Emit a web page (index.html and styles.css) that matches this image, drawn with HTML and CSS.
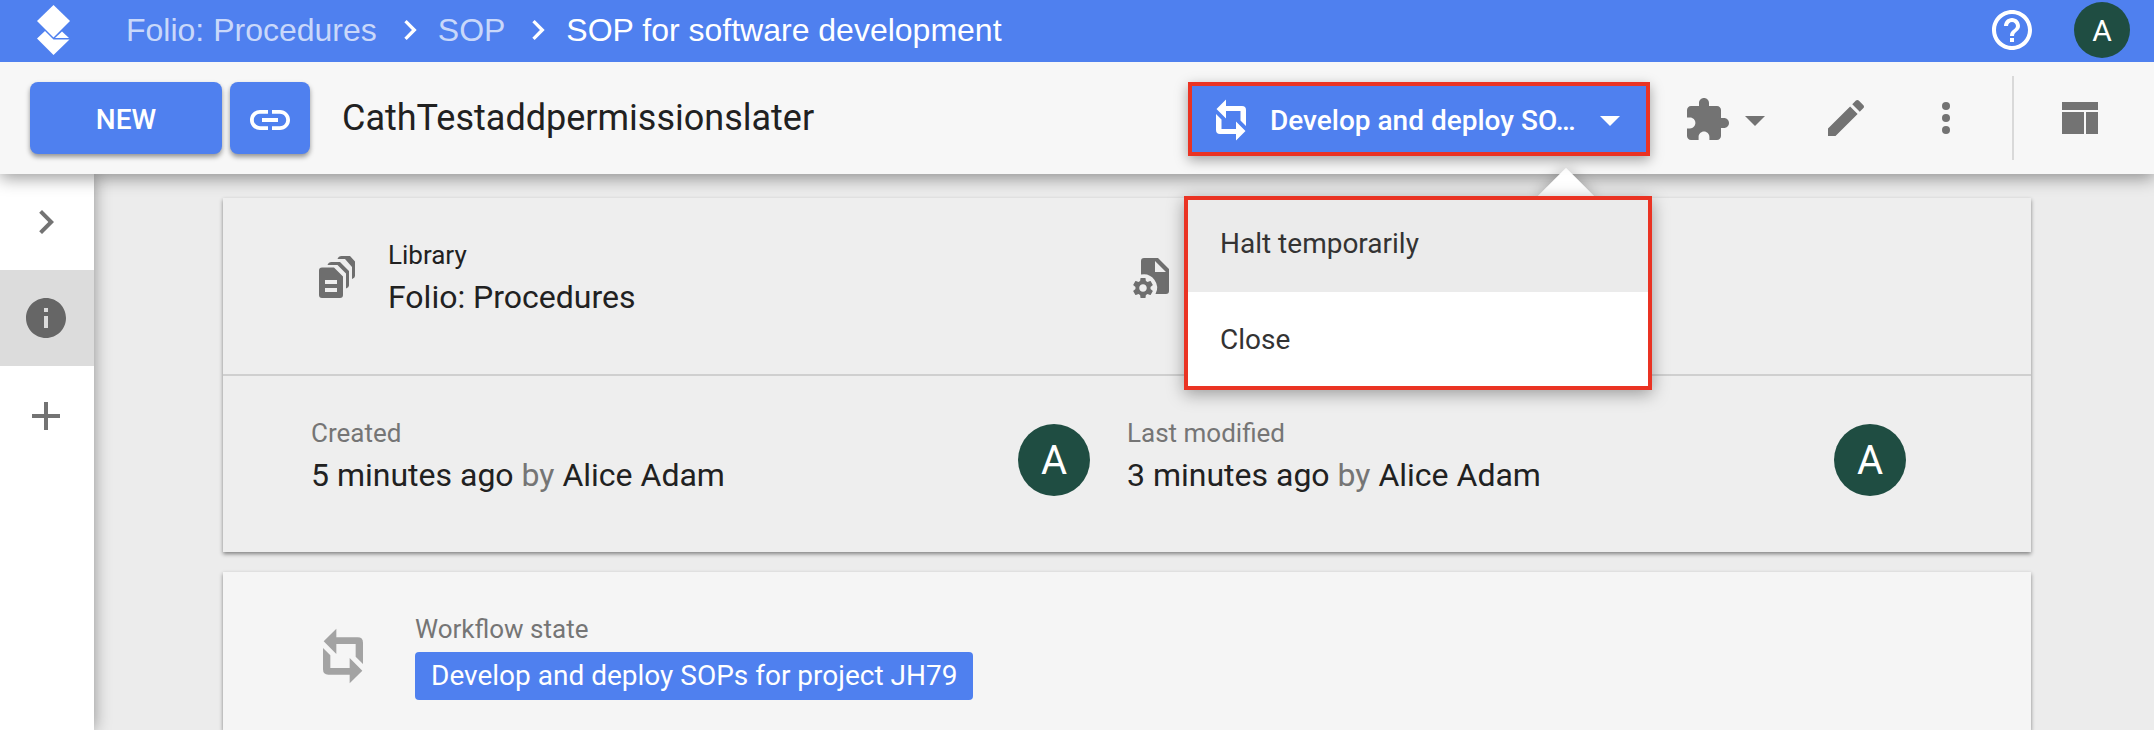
FILE: index.html
```
<!DOCTYPE html>
<html lang="en">
<head>
<meta charset="UTF-8" />
<meta name="viewport" content="width=device-width, initial-scale=1" />
<title>SOP for software development</title>
<link rel="stylesheet" href="styles.css">
</head>
<body>
<svg class="sprite" aria-hidden="true">
  <symbol id="chevron" viewBox="0 0 24 24"><path d="M10 6 8.59 7.41 13.17 12l-4.58 4.59L10 18l6-6z"/></symbol>
  <symbol id="caret" viewBox="0 0 24 24"><path d="M7 10l5 5 5-5z"/></symbol>
  <symbol id="workflow" viewBox="0 0 48 48">
    <path d="M9.5 13 19 3.500V10h16q4 0 4 4v16l-5.500-5.500V15H19v7.500z"/>
    <path d="M38.500 35 29 44.500V38H13q-4 0-4-4V18l5.500 5.500V33H29v-7.500z"/>
  </symbol>
</svg>

<header class="topbar">
  <a href="#" class="logo" aria-label="Home">
    <svg viewBox="0 0 36 52"><path d="M17.500 1 34 17 17.500 33.500 1 17z"/><path d="M9 27 17.500 35.500h16L17.500 51 1 34.500z"/><path d="M26 27.500 33 34H19z"/><path d="M9 27l8.500 8.500L9 27z"/></svg>
  </a>
  <nav class="breadcrumb" aria-label="Breadcrumb">
    <a href="#">Folio: Procedures</a>
    <svg><use href="#chevron"/></svg>
    <a href="#">SOP</a>
    <svg><use href="#chevron"/></svg>
    <a href="#" class="current">SOP for software development</a>
  </nav>
  <button class="icon-btn help" aria-label="Help">
    <svg viewBox="0 0 24 24"><path d="M11 18h2v-2h-2v2zm1-16C6.480 2 2 6.480 2 12s4.480 10 10 10 10-4.480 10-10S17.520 2 12 2zm0 18c-4.410 0-8-3.590-8-8s3.590-8 8-8 8 3.590 8 8-3.590 8-8 8zm0-14c-2.210 0-4 1.790-4 4h2c0-1.100.9-2 2-2s2 .9 2 2c0 2-3 1.750-3 5h2c0-2.250 3-2.500 3-5 0-2.210-1.790-4-4-4z"/></svg>
  </button>
  <button class="avatar small">A</button>
</header>

<div class="toolbar">
  <button class="btn new">NEW</button>
  <button class="btn link" aria-label="Copy link">
    <svg viewBox="0 0 24 24"><path d="M3.900 12c0-1.710 1.390-3.100 3.100-3.100h4V7H7c-2.760 0-5 2.240-5 5s2.240 5 5 5h4v-1.900H7c-1.710 0-3.100-1.390-3.100-3.100zM8 13h8v-2H8v2zm9-6h-4v1.900h4c1.710 0 3.100 1.390 3.100 3.100s-1.390 3.100-3.100 3.100h-4V17h4c2.760 0 5-2.240 5-5s-2.240-5-5-5z"/></svg>
  </button>
  <h1>CathTestaddpermissionslater</h1>
  <div class="workflow">
    <button class="workflow-btn" aria-haspopup="menu" aria-expanded="true" title="Develop and deploy SOPs for project JH79">
      <svg><use href="#workflow"/></svg>
      <span>Develop and deploy SO…</span>
      <svg><use href="#caret"/></svg>
    </button>
    <div class="menu" role="menu">
      <button class="menu-item active" role="menuitem">Halt temporarily</button>
      <button class="menu-item" role="menuitem">Close</button>
    </div>
  </div>
  <button class="icon-btn plugins" aria-label="Plugins">
    <svg viewBox="0 0 24 24"><path d="M20.500 11H19V7c0-1.100-.9-2-2-2h-4V3.500C13 2.120 11.880 1 10.500 1S8 2.120 8 3.500V5H4c-1.100 0-1.990.9-1.990 2v3.800H3.500c1.490 0 2.700 1.210 2.700 2.700s-1.210 2.700-2.700 2.700H2V20c0 1.100.9 2 2 2h3.800v-1.500c0-1.490 1.210-2.700 2.700-2.700 1.490 0 2.700 1.210 2.700 2.700V22H17c1.100 0 2-.9 2-2v-4h1.500c1.380 0 2.500-1.120 2.500-2.500S21.880 11 20.500 11z"/></svg>
    <svg><use href="#caret"/></svg>
  </button>
  <button class="icon-btn edit" aria-label="Edit">
    <svg viewBox="0 0 24 24"><path d="M3 17.250V21h3.750L17.810 9.940l-3.750-3.750L3 17.250zM20.710 7.040c.39-.39.39-1.020 0-1.410l-2.340-2.340c-.39-.39-1.020-.39-1.410 0l-1.830 1.830 3.750 3.750 1.830-1.830z"/></svg>
  </button>
  <button class="icon-btn" aria-label="More">
    <svg viewBox="0 0 24 24"><circle cx="12" cy="6" r="2"/><circle cx="12" cy="12" r="2"/><circle cx="12" cy="18" r="2"/></svg>
  </button>
  <button class="icon-btn panel" aria-label="Layout">
    <svg viewBox="0 0 24 24"><path d="M3 4h18v4H3zM3 9h11v11H3zM15 9h6v11h-6z"/></svg>
  </button>
</div>

<div class="content">
  <aside class="sidebar">
    <button aria-label="Expand"><svg><use href="#chevron"/></svg></button>
    <button class="active" aria-label="Info">
      <svg viewBox="0 0 24 24"><path d="M12 2C6.480 2 2 6.480 2 12s4.480 10 10 10 10-4.480 10-10S17.520 2 12 2zm1 15h-2v-6h2v6zm0-8h-2V7h2v2z"/></svg>
    </button>
    <button class="add" aria-label="Add"><svg viewBox="0 0 24 24"><path d="M19 13h-6v6h-2v-6H5v-2h6V5h2v6h6v2z"/></svg></button>
  </aside>

  <main>
    <section class="card">
      <div class="row">
        <div class="field">
          <svg class="field-icon" viewBox="0 0 48 48">
            <path fill-rule="evenodd" d="M8 14.500h12l9 9V42q0 3-3 3H8q-3 0-3-3V17.500q0-3 3-3zM11 27v4h12v-4zm0 8v4h12v-4z"/>
            <path d="M13.500 12q1-3 4-3H26l9 9v14.500q0 2-3 3V20.500L23.500 12z"/>
            <path d="M23.500 6q1-3 4-3H36l5 5.500V23q0 2-3 3V14l-7-8z"/>
          </svg>
          <div class="field-text">
            <div class="label dark">Library</div>
            <div class="value">Folio: Procedures</div>
          </div>
        </div>
        <div class="field">
          <svg class="field-icon" viewBox="0 0 48 48">
            <path fill-rule="evenodd" d="M14 5h14l11 11v22q0 3-3 3H25.500A13.500 13.500 0 0 0 11 21.500V8q0-3 3-3zm11 3v11h11z"/>
            <path transform="translate(.4 22.400) scale(1.050)" d="M19.140 12.940c.04-.3.06-.61.06-.94 0-.32-.02-.64-.07-.94l2.030-1.580c.18-.14.23-.41.12-.61l-1.920-3.320c-.12-.22-.37-.29-.59-.22l-2.390.96c-.5-.38-1.030-.7-1.620-.94l-.36-2.540c-.04-.24-.24-.41-.48-.41h-3.840c-.24 0-.43.17-.47.41l-.36 2.540c-.59.24-1.130.57-1.620.94l-2.390-.96c-.22-.08-.47 0-.59.22L2.740 8.870c-.12.21-.08.47.12.61l2.030 1.580c-.05.3-.09.63-.09.94s.02.64.07.94l-2.030 1.580c-.18.14-.23.41-.12.61l1.920 3.320c.12.22.37.29.59.22l2.390-.96c.5.38 1.030.7 1.620.94l.36 2.540c.05.24.24.41.48.41h3.840c.24 0 .44-.17.47-.41l.36-2.540c.59-.24 1.130-.56 1.620-.94l2.390.96c.22.08.47 0 .59-.22l1.920-3.320c.12-.22.07-.47-.12-.61l-2.010-1.580zM12 15.600c-1.980 0-3.600-1.620-3.600-3.600s1.620-3.600 3.600-3.600 3.600 1.620 3.600 3.600-1.620 3.600-3.600 3.600z"/>
          </svg>
        </div>
      </div>
      <div class="row">
        <div class="field">
          <div class="field-text">
            <div class="label">Created</div>
            <div class="value">5 minutes ago <span>by</span> Alice Adam</div>
          </div>
          <div class="avatar">A</div>
        </div>
        <div class="field">
          <div class="field-text">
            <div class="label">Last modified</div>
            <div class="value">3 minutes ago <span>by</span> Alice Adam</div>
          </div>
          <div class="avatar">A</div>
        </div>
      </div>
    </section>

    <section class="card state">
      <svg><use href="#workflow"/></svg>
      <div>
        <div class="label">Workflow state</div>
        <div class="chip">Develop and deploy SOPs for project JH79</div>
      </div>
    </section>
  </main>
</div>
</body>
</html>
```
FILE: styles.css
```
* {
  box-sizing: border-box;
}
body {
  margin: 0;
  min-height: 100vh;
  display: flex;
  flex-direction: column;
  font-family: Roboto, sans-serif;
  color: #212121;
  background: #ececec;
}
button {
  border: none;
  padding: 0;
  background: none;
  color: inherit;
  font-family: inherit;
  cursor: pointer;
}
svg {
  display: block;
  flex-shrink: 0;
  width: 48px;
  height: 48px;
  fill: currentColor;
}
.sprite {
  display: none;
}

/* top bar */
.topbar {
  position: relative;
  z-index: 3;
  display: flex;
  align-items: center;
  height: 62px;
  padding: 0 24px 2px 36px;
  background: #4f80ef;
  color: #fff;
}
.logo {
  color: #fff;
  margin-right: 54px;
}
.logo svg {
  width: 36px;
  height: 52px;
}
.breadcrumb {
  flex: 1;
  display: flex;
  align-items: center;
  gap: 8px;
  font-family: "Liberation Sans", Arial, sans-serif;
  font-size: 32px;
  line-height: 40px;
}
.breadcrumb a {
  color: #c9d8fa;
  text-decoration: none;
}
.breadcrumb a.current {
  color: #fff;
}
.breadcrumb svg {
  width: 40px;
  height: 40px;
  margin-left: 5px;
}
.help {
  margin-right: 38px;
}
.avatar {
  display: flex;
  align-items: center;
  justify-content: center;
  flex-shrink: 0;
  width: 72px;
  height: 72px;
  border-radius: 50%;
  background: #1f4d42;
  color: #fff;
  font-size: 40px;
}
.avatar.small {
  width: 56px;
  height: 56px;
  font-size: 30px;
}

/* toolbar */
.toolbar {
  position: relative;
  z-index: 2;
  display: flex;
  align-items: center;
  height: 112px;
  padding: 0 50px 0 30px;
  background: #f7f7f7;
  color: #737373;
  box-shadow: 0 4px 16px rgba(0, 0, 0, 0.4);
}
.btn {
  display: flex;
  align-items: center;
  justify-content: center;
  height: 72px;
  padding-top: 3px;
  border-radius: 8px;
  background: #4f80ef;
  color: #fff;
  font-size: 28px;
  font-weight: 500;
  box-shadow: 0 3px 5px rgba(0, 0, 0, 0.4);
}
.new {
  width: 192px;
  margin-right: 8px;
}
.link {
  width: 80px;
}
h1 {
  flex: 1;
  margin: 0 0 0 32px;
  color: #212121;
  font-size: 36px;
  font-weight: 400;
  line-height: 48px;
}
.workflow {
  position: relative;
  margin: 2px 33px 0 0;
}
.workflow-btn {
  display: flex;
  align-items: center;
  width: 462px;
  height: 74px;
  padding: 2px 12px 0 15px;
  border: 4px solid #ea3323;
  background: #4f80ef;
  color: #fff;
  font-size: 28px;
  font-weight: 500;
  box-shadow: 0 4px 12px rgba(0, 0, 0, 0.35);
}
.workflow-btn span {
  flex: 1;
  margin-left: 15px;
  text-align: left;
  white-space: nowrap;
}
.menu {
  position: absolute;
  top: 114px;
  right: -2px;
  width: 468px;
  border: 4px solid #ea3323;
  background: #fff;
  box-shadow: 0 4px 16px rgba(0, 0, 0, 0.35);
}
.menu::before {
  content: "";
  position: absolute;
  z-index: -1;
  top: -24px;
  right: 62px;
  width: 40px;
  height: 40px;
  background: #fff;
  box-shadow: 0 0 14px rgba(0, 0, 0, 0.25);
  transform: rotate(45deg);
}
.menu-item {
  display: block;
  width: 100%;
  height: 94px;
  padding: 0 32px;
  background: #fff;
  color: #333;
  font-size: 28px;
  text-align: left;
}
.menu-item.active {
  height: 92px;
  padding-bottom: 6px;
  background: #ebebeb;
}
.icon-btn {
  display: flex;
}
.plugins {
  margin-right: 43px;
  padding-top: 4px;
}
.edit {
  margin-right: 52px;
}
.panel {
  margin-left: 42px;
  padding: 18px 0 18px 42px;
  border-left: 2px solid #d9d9d9;
}

/* page */
.content {
  flex: 1;
  display: flex;
}
.sidebar {
  position: relative;
  z-index: 1;
  width: 94px;
  background: #fff;
  color: #737373;
  box-shadow: 0 0 16px rgba(0, 0, 0, 0.4);
}
.sidebar button {
  display: flex;
  align-items: center;
  justify-content: center;
  width: 100%;
  height: 96px;
  padding-right: 2px;
}
.sidebar button.active {
  background: #dcdcdc;
  color: #666;
}
.sidebar button.add {
  height: 100px;
}
main {
  flex: 1;
  display: flex;
  flex-direction: column;
  gap: 20px;
  padding: 24px 123px 0 129px;
}
.card {
  background: #eee;
  box-shadow: 0 2px 4px rgba(0, 0, 0, 0.45);
}
.row {
  display: flex;
  height: 176px;
  padding: 40px 88px 0;
}
.row + .row {
  height: 178px;
  border-top: 2px solid #cfcfcf;
}
.field {
  flex: 1;
  display: flex;
}
.field-icon {
  margin: 15px 26px 0 3px;
  color: #6e6e6e;
}
.field-text {
  flex: 1;
}
.label {
  color: #757575;
  font-size: 26px;
  line-height: 34px;
}
.label.dark {
  color: #212121;
}
.value {
  font-size: 32px;
  line-height: 50px;
}
.value span {
  color: #757575;
}
.field .avatar {
  margin: 8px 37px 0 0;
}
.state {
  flex: 1;
  display: flex;
  padding: 40px 88px 0;
  background: #f5f5f5;
}
.state svg {
  width: 64px;
  height: 64px;
  margin: 12px 40px 0 0;
  color: #a3a3a3;
}
.chip {
  margin-top: 6px;
  padding: 0 16px;
  border-radius: 4px;
  background: #4f80ef;
  color: #fff;
  font-size: 28px;
  line-height: 48px;
}
```
